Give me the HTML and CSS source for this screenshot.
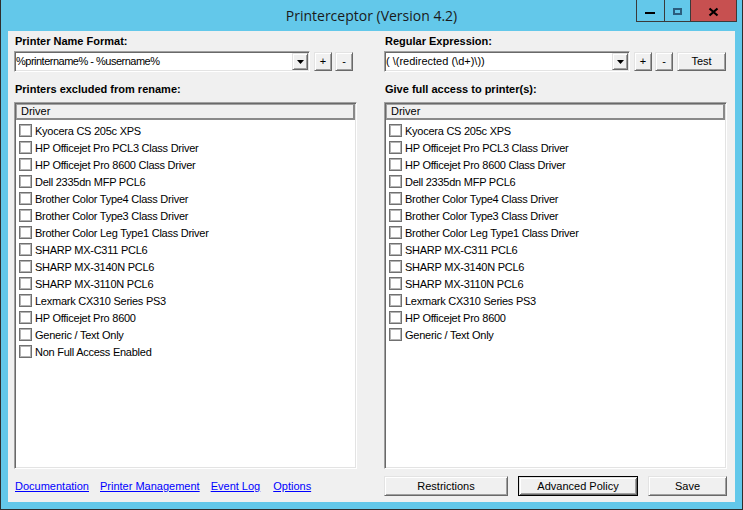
FILE: index.html
```html
<!DOCTYPE html>
<html>
<head>
<meta charset="utf-8">
<link rel="stylesheet" href="styles.css">
</head>
<body>
<div class="window">
  <div class="titlebar">
    <div></div>
    <div class="title">Printerceptor (Version 4.2)</div>
    <div class="caption">
      <div class="cbtn min"><svg width="27" height="21"><rect x="8" y="12" width="10" height="2" fill="#000"/></svg></div>
      <div class="cbtn max"><svg width="25" height="21"><rect x="9" y="9" width="7" height="5" fill="none" stroke="#2b5d7d" stroke-width="2"/></svg></div>
      <div class="cbtn close"><svg width="45" height="21"><path d="M18.5 8.5 L26.5 15.5 M26.5 8.5 L18.5 15.5" stroke="#000" stroke-width="2.2"/></svg></div>
    </div>
  </div>
  <div class="client">
    <div class="label">Printer Name Format:</div>
    <div class="label">Regular Expression:</div>

    <div class="controls">
      <div class="combo combo-left">
        <span class="combo-text tight">%printername% - %username%</span>
        <span class="drop"><svg width="7" height="4"><path d="M0 0H7L3.5 4Z" fill="#000"/></svg></span>
      </div>
      <button class="btn small">+</button>
      <button class="btn small">-</button>
    </div>
    <div class="controls">
      <div class="combo combo-right">
        <span class="combo-text">( \(redirected (\d+)\))</span>
        <span class="drop"><svg width="7" height="4"><path d="M0 0H7L3.5 4Z" fill="#000"/></svg></span>
      </div>
      <button class="btn small">+</button>
      <button class="btn small">-</button>
      <button class="btn test">Test</button>
    </div>

    <div class="label label2">Printers excluded from rename:</div>
    <div class="label label2">Give full access to printer(s):</div>

    <div class="list">
      <div class="list-header">Driver</div>
      <div class="list-body">
        <div class="item"><span class="check"></span><span>Kyocera CS 205c XPS</span></div>
        <div class="item"><span class="check"></span><span>HP Officejet Pro PCL3 Class Driver</span></div>
        <div class="item"><span class="check"></span><span>HP Officejet Pro 8600 Class Driver</span></div>
        <div class="item"><span class="check"></span><span>Dell 2335dn MFP PCL6</span></div>
        <div class="item"><span class="check"></span><span>Brother Color Type4 Class Driver</span></div>
        <div class="item"><span class="check"></span><span>Brother Color Type3 Class Driver</span></div>
        <div class="item"><span class="check"></span><span>Brother Color Leg Type1 Class Driver</span></div>
        <div class="item"><span class="check"></span><span>SHARP MX-C311 PCL6</span></div>
        <div class="item"><span class="check"></span><span>SHARP MX-3140N PCL6</span></div>
        <div class="item"><span class="check"></span><span>SHARP MX-3110N PCL6</span></div>
        <div class="item"><span class="check"></span><span>Lexmark CX310 Series PS3</span></div>
        <div class="item"><span class="check"></span><span>HP Officejet Pro 8600</span></div>
        <div class="item"><span class="check"></span><span>Generic / Text Only</span></div>
        <div class="item"><span class="check"></span><span>Non Full Access Enabled</span></div>
      </div>
    </div>
    <div class="list">
      <div class="list-header">Driver</div>
      <div class="list-body">
        <div class="item"><span class="check"></span><span>Kyocera CS 205c XPS</span></div>
        <div class="item"><span class="check"></span><span>HP Officejet Pro PCL3 Class Driver</span></div>
        <div class="item"><span class="check"></span><span>HP Officejet Pro 8600 Class Driver</span></div>
        <div class="item"><span class="check"></span><span>Dell 2335dn MFP PCL6</span></div>
        <div class="item"><span class="check"></span><span>Brother Color Type4 Class Driver</span></div>
        <div class="item"><span class="check"></span><span>Brother Color Type3 Class Driver</span></div>
        <div class="item"><span class="check"></span><span>Brother Color Leg Type1 Class Driver</span></div>
        <div class="item"><span class="check"></span><span>SHARP MX-C311 PCL6</span></div>
        <div class="item"><span class="check"></span><span>SHARP MX-3140N PCL6</span></div>
        <div class="item"><span class="check"></span><span>SHARP MX-3110N PCL6</span></div>
        <div class="item"><span class="check"></span><span>Lexmark CX310 Series PS3</span></div>
        <div class="item"><span class="check"></span><span>HP Officejet Pro 8600</span></div>
        <div class="item"><span class="check"></span><span>Generic / Text Only</span></div>
      </div>
    </div>

    <div class="bottom links">
      <a href="#">Documentation</a>
      <a href="#">Printer Management</a>
      <a href="#">Event Log</a>
      <a href="#" class="opt">Options</a>
    </div>
    <div class="bottom buttons">
      <button class="btn restr">Restrictions</button>
      <button class="btn adv default">Advanced Policy</button>
      <button class="btn save">Save</button>
    </div>
  </div>
</div>
</body>
</html>
```

FILE: styles.css
```css
html, body {
  margin: 0;
  padding: 0;
}
body {
  font-family: "Liberation Sans", Arial, sans-serif;
  font-size: 11px;
  color: #000;
}
.window {
  width: 743px;
  height: 510px;
  box-sizing: border-box;
  background: #63c8ea;
  border: 1px solid #2e2e2e;
  border-top: none;
  display: flex;
  flex-direction: column;
}
.titlebar {
  height: 31px;
  flex: none;
  display: grid;
  grid-template-columns: 1fr auto 1fr;
}
.title {
  font-family: "Open Sans", "Noto Sans", sans-serif;
  font-size: 14px;
  color: #1a1a1a;
  align-self: center;
  white-space: nowrap;
}
.caption {
  justify-self: end;
  align-self: start;
  display: flex;
  border-left: 1px solid #3a3a3a;
  margin-right: 5px;
}
.cbtn {
  height: 21px;
  border-right: 1px solid #3a3a3a;
  border-bottom: 1px solid #3a3a3a;
}
.cbtn svg {
  display: block;
}
.close {
  background: #c75050;
}
.client {
  flex: 1;
  margin: 0 7px 7px;
  background: #f0f0f0;
  padding: 4px 8px 0 6px;
  display: grid;
  grid-template-columns: 343px 343px;
  column-gap: 27px;
  align-content: start;
}
.label {
  font-weight: bold;
  line-height: 13px;
  padding-left: 1px;
}
.label2 {
  margin-top: 11px;
}
.controls {
  margin-top: 3px;
  height: 21px;
  display: flex;
  align-items: center;
  gap: 3px;
}
.combo {
  height: 21px;
  box-sizing: border-box;
  border: 1px solid;
  border-color: #a0a0a0 #ffffff #ffffff #a0a0a0;
  box-shadow: inset 1px 1px #696969, inset -1px -1px #e3e3e3;
  background: #fff;
  padding: 1px;
  display: flex;
  align-items: stretch;
  margin-right: 1px;
}
.combo-left {
  width: 296px;
}
.combo-right {
  width: 246px;
}
.combo-text {
  flex: 1;
  line-height: 17px;
  white-space: nowrap;
  overflow: hidden;
}
.tight {
  letter-spacing: -0.5px;
}
.drop {
  width: 16px;
  box-sizing: border-box;
  background: #f0f0f0;
  border: 1px solid;
  border-color: #e3e3e3 #696969 #696969 #e3e3e3;
  box-shadow: inset 1px 1px #fff, inset -1px -1px #a0a0a0;
  display: flex;
  align-items: center;
  justify-content: center;
}
.drop svg {
  display: block;
}
.btn {
  font-family: "Liberation Sans", Arial, sans-serif;
  font-size: 11px;
  color: #000;
  background: #f0f0f0;
  border: 1px solid;
  border-color: #e3e3e3 #696969 #696969 #e3e3e3;
  box-shadow: inset 1px 1px #fff, inset -1px -1px #a0a0a0;
  padding: 0;
  margin: 0;
  box-sizing: border-box;
  line-height: 15px;
}
.small {
  width: 18px;
  height: 19px;
}
.test {
  width: 49px;
  height: 19px;
  margin-left: 1px;
}
.list {
  margin-top: 6px;
  height: 367px;
  box-sizing: border-box;
  border: 1px solid;
  border-color: #a0a0a0 #ffffff #ffffff #a0a0a0;
  box-shadow: inset 1px 1px #696969, inset -1px -1px #e3e3e3;
  background: #fff;
  padding: 1px;
}
.list-header {
  height: 16px;
  box-sizing: border-box;
  background: #f0f0f0;
  border: 1px solid #a0a0a0;
  border-right: 2px solid #8a8a8a;
  border-bottom: 2px solid #8a8a8a;
  padding-left: 4px;
  line-height: 13px;
}
.list-body {
  padding-top: 2px;
}
.item {
  height: 17px;
  display: flex;
  align-items: center;
  gap: 3px;
  padding-left: 3px;
  white-space: nowrap;
  letter-spacing: -0.25px;
}
.check {
  width: 13px;
  height: 13px;
  box-sizing: border-box;
  border: 1px solid #707070;
  box-shadow: inset 0 0 0 1px #b4b4b4;
  background: #fff;
  flex: none;
}
.bottom {
  margin-top: 7px;
  height: 20px;
  display: flex;
  align-items: center;
}
.links {
  gap: 11px;
  padding-left: 1px;
}
.links a {
  color: #0000ff;
  text-decoration: underline;
  line-height: 13px;
}
.links .opt {
  margin-left: 2px;
}
.buttons {
  gap: 10px;
}
.buttons .btn {
  height: 20px;
}
.restr {
  width: 124px;
}
.adv {
  width: 120px;
}
.save {
  width: 79px;
}
.default {
  border: 1px solid #000;
  box-shadow: inset 1px 1px #e3e3e3, inset -1px -1px #696969, inset 2px 2px #fff, inset -2px -2px #a0a0a0;
}
```
